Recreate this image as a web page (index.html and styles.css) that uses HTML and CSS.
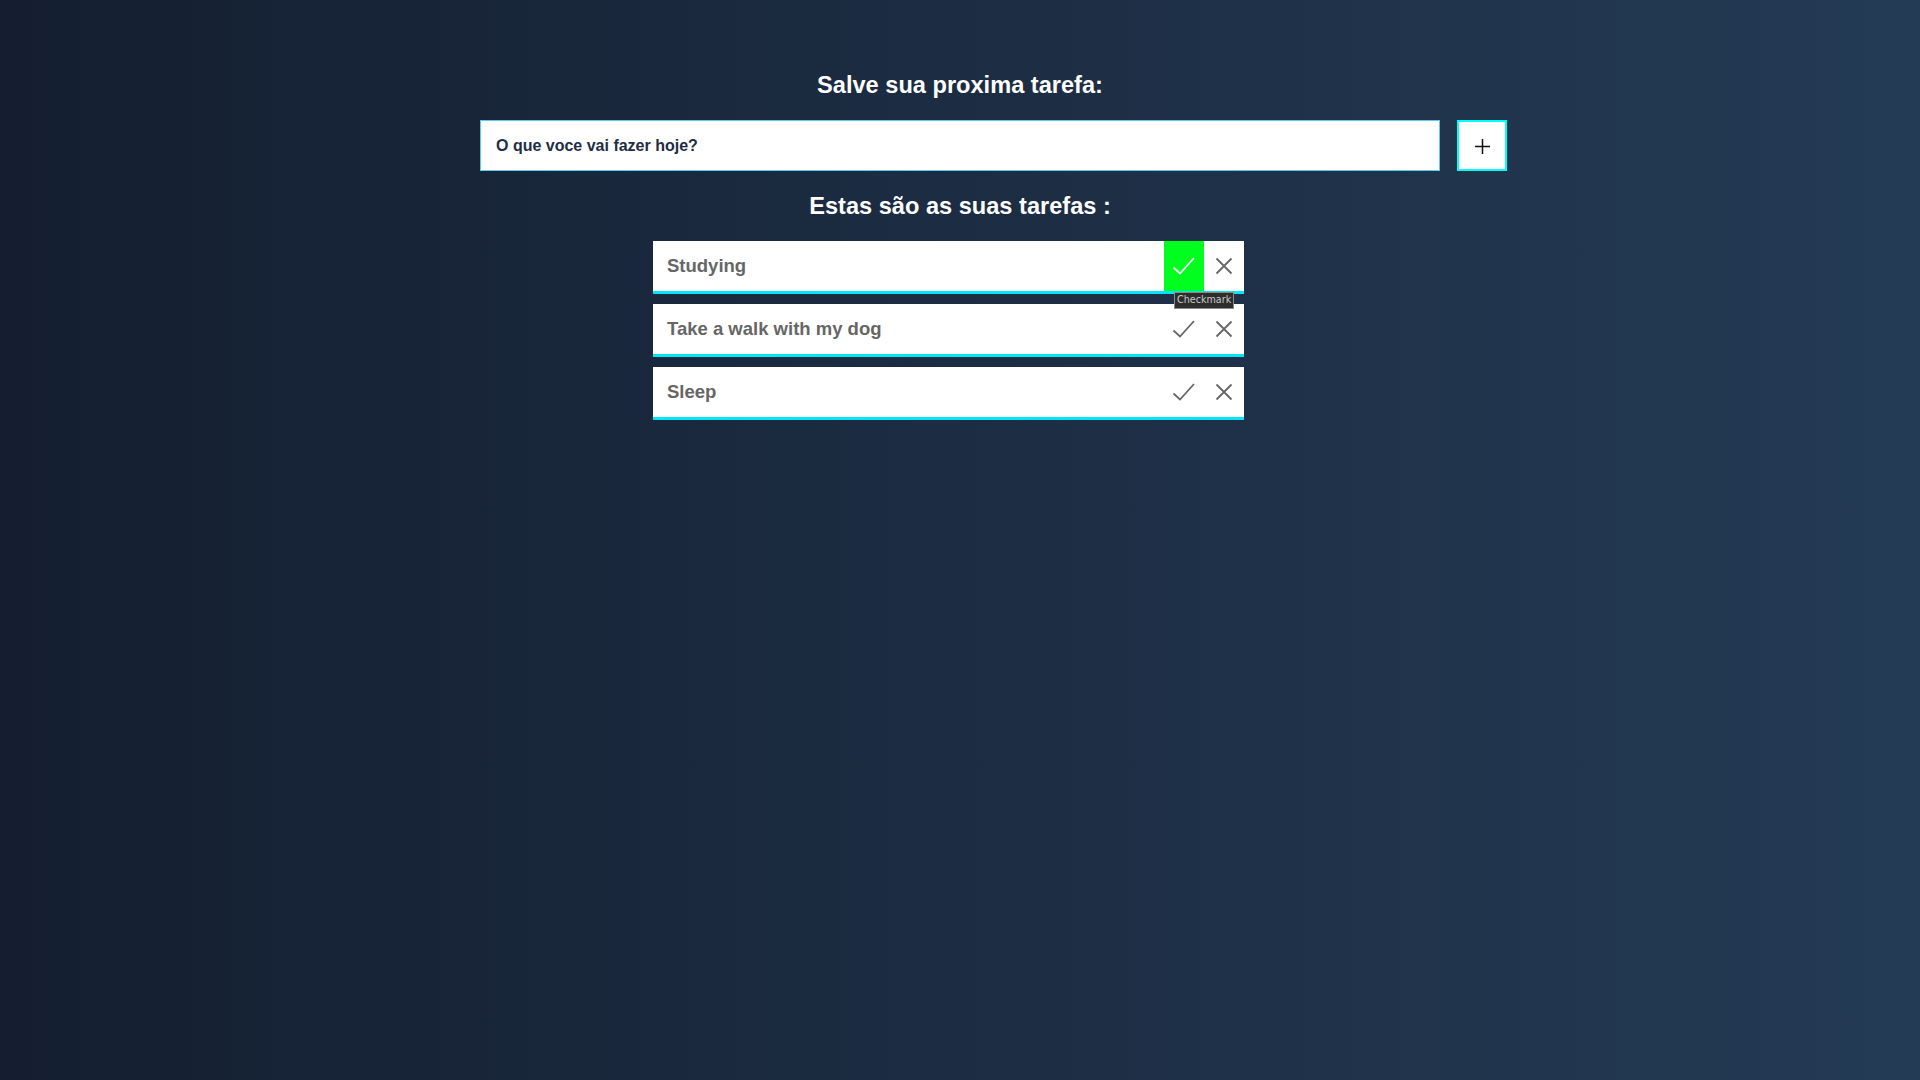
FILE: index.html
```html
<!DOCTYPE html>
<html lang="pt">
<head>
<meta charset="utf-8">
<title>Tarefas</title>
<link rel="stylesheet" href="styles.css">
</head>
<body>
<main class="app">
  <h1 class="title">Salve sua proxima tarefa:</h1>
  <form class="new-task">
    <input class="task-input" type="text" placeholder="O que voce vai fazer hoje?">
    <button class="add-btn" type="button" aria-label="Adicionar">
      <svg width="50" height="50" viewBox="0 0 50 50"><path d="M25.5 18v15M18 25.5h15" stroke="#111" stroke-width="1.5" fill="none"/></svg>
    </button>
  </form>
  <h2 class="title">Estas são as suas tarefas :</h2>
  <div class="list-wrap">
    <ul class="task-list">
      <li class="task">
        <span class="task-text">Studying</span>
        <button class="icon-btn check active" type="button">
          <svg width="40" height="50" viewBox="0 0 40 50"><path d="M9.5 26.5L16 32.5L30 17" stroke="#fff" stroke-width="1.8" fill="none"/></svg>
          <span class="tooltip">Checkmark</span>
        </button>
        <button class="icon-btn remove" type="button">
          <svg width="40" height="50" viewBox="0 0 40 50"><path d="M12.5 17.5L27.5 32.5M27.5 17.5L12.5 32.5" stroke="#666" stroke-width="1.8" fill="none"/></svg>
        </button>
      </li>
      <li class="task">
        <span class="task-text">Take a walk with my dog</span>
        <button class="icon-btn check" type="button">
          <svg width="40" height="50" viewBox="0 0 40 50"><path d="M9.5 26.5L16 32.5L30 17" stroke="#666" stroke-width="1.8" fill="none"/></svg>
        </button>
        <button class="icon-btn remove" type="button">
          <svg width="40" height="50" viewBox="0 0 40 50"><path d="M12.5 17.5L27.5 32.5M27.5 17.5L12.5 32.5" stroke="#666" stroke-width="1.8" fill="none"/></svg>
        </button>
      </li>
      <li class="task">
        <span class="task-text">Sleep</span>
        <button class="icon-btn check" type="button">
          <svg width="40" height="50" viewBox="0 0 40 50"><path d="M9.5 26.5L16 32.5L30 17" stroke="#666" stroke-width="1.8" fill="none"/></svg>
        </button>
        <button class="icon-btn remove" type="button">
          <svg width="40" height="50" viewBox="0 0 40 50"><path d="M12.5 17.5L27.5 32.5M27.5 17.5L12.5 32.5" stroke="#666" stroke-width="1.8" fill="none"/></svg>
        </button>
      </li>
    </ul>
  </div>
</main>
</body>
</html>
```
FILE: styles.css
```css
* { box-sizing: border-box; }
html, body { margin: 0; padding: 0; }
body {
  min-height: 100vh;
  background: linear-gradient(to right, #141e30, #243b55);
  font-family: "Liberation Sans", Arial, sans-serif;
}
.app {
  padding-top: 71px;
  display: flex;
  flex-direction: column;
  align-items: center;
}
.title {
  margin: 0;
  color: #fff;
  font-size: 23.6px;
  font-weight: bold;
  line-height: 28px;
  text-align: center;
}
h2.title { margin-top: 21px; }
.new-task {
  margin-top: 21px;
  width: 960px;
  display: flex;
}
.task-input {
  flex: 0 0 960px;
  height: 51px;
  border: 1px solid #5ccbf4;
  background: #fff;
  padding: 0 15px;
  font-family: "Liberation Sans", Arial, sans-serif;
  font-size: 16px;
  font-weight: bold;
  color: #1e2d45;
  outline: none;
}
.task-input::placeholder { color: #1e2d45; opacity: 1; }
.add-btn {
  flex: 0 0 50px;
  margin-left: 17px;
  height: 51px;
  padding: 0;
  border: 2px solid #00ffff;
  background: #fff;
  display: flex;
  align-items: center;
  justify-content: center;
}
.add-btn svg { display: block; margin: -2px; }
.list-wrap {
  margin-top: 21px;
  width: 614px;
}
.task-list {
  list-style: none;
  margin: 0;
  padding: 0;
  width: 591px;
  display: flex;
  flex-direction: column;
  gap: 10px;
}
.task {
  display: flex;
  align-items: stretch;
  height: 53px;
  background: #fff;
  border-bottom: 3px solid #00e6f6;
}
.task-text {
  flex: 1;
  display: flex;
  align-items: center;
  padding-left: 14px;
  font-size: 18.5px;
  font-weight: bold;
  color: #666;
}
.icon-btn {
  position: relative;
  width: 40px;
  height: 50px;
  padding: 0;
  border: 0;
  background: transparent;
}
.icon-btn svg { display: block; }
.check.active { background: #00ff1e; }
.tooltip {
  position: absolute;
  left: 10px;
  top: 51px;
  z-index: 2;
  padding: 1px 2px 2px;
  background: #2d2d2d;
  border: 1px solid #8a8a8a;
  color: #c8c8c8;
  font-family: "DejaVu Sans", sans-serif;
  font-size: 9.6px;
  line-height: 12px;
  white-space: nowrap;
}
```
